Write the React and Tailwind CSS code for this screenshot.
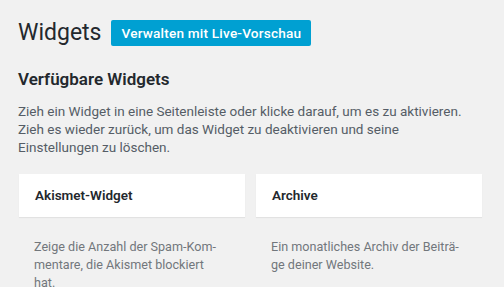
import React from "react";

const widgets = [
  {
    name: "Akismet-Widget",
    lines: ["Zeige die Anzahl der Spam-Kom-", "mentare, die Akismet blockiert", "hat."],
  },
  {
    name: "Archive",
    lines: ["Ein monatliches Archiv der Beiträ-", "ge deiner Website."],
  },
];

function WidgetCard({ widget }) {
  return (
    <div className="flex flex-col">
      <div className="h-[43px] bg-white shadow-[0_1px_1px_rgba(0,0,0,0.06)] flex items-center px-[16px] text-[13.5px] font-semibold text-[#23282d]">
        {widget.name}
      </div>
      <p className="mt-[21px] px-[15px] text-[12.6px] leading-[18px] text-[#72777c] whitespace-nowrap">
        {widget.lines.map((line, i) => (
          <span key={i} className="block">
            {line}
          </span>
        ))}
      </p>
    </div>
  );
}

export default function App() {
  return (
    <div
      className="w-[504px] h-[287px] overflow-hidden bg-[#f1f1f1] px-[18px] pt-[19px]"
      style={{ fontFamily: "Roboto, 'Noto Sans', sans-serif" }}
    >
      <div className="flex items-center gap-[10px]">
        <h1 className="text-[23px] leading-[28px] font-normal text-[#23282d]">Widgets</h1>
        <button className="h-[26px] px-[10px] bg-[#00a0d2] text-white text-[13.6px] font-medium rounded-[2px] tracking-[0.2px]">
          Verwalten mit Live-Vorschau
        </button>
      </div>
      <h2 className="mt-[21px] text-[17px] leading-[22px] font-semibold text-[#23282d]">
        Verfügbare Widgets
      </h2>
      <p className="mt-[12px] text-[13.5px] leading-[18px] text-[#555d66] whitespace-nowrap">
        Zieh ein Widget in eine Seitenleiste oder klicke darauf, um es zu aktivieren.
        <br />
        Zieh es wieder zurück, um das Widget zu deaktivieren und seine
        <br />
        Einstellungen zu löschen.
      </p>
      <div className="mt-[18px] ml-[1px] grid grid-cols-[226px_226px] gap-[11px]">
        {widgets.map((w) => (
          <WidgetCard key={w.name} widget={w} />
        ))}
      </div>
    </div>
  );
}
